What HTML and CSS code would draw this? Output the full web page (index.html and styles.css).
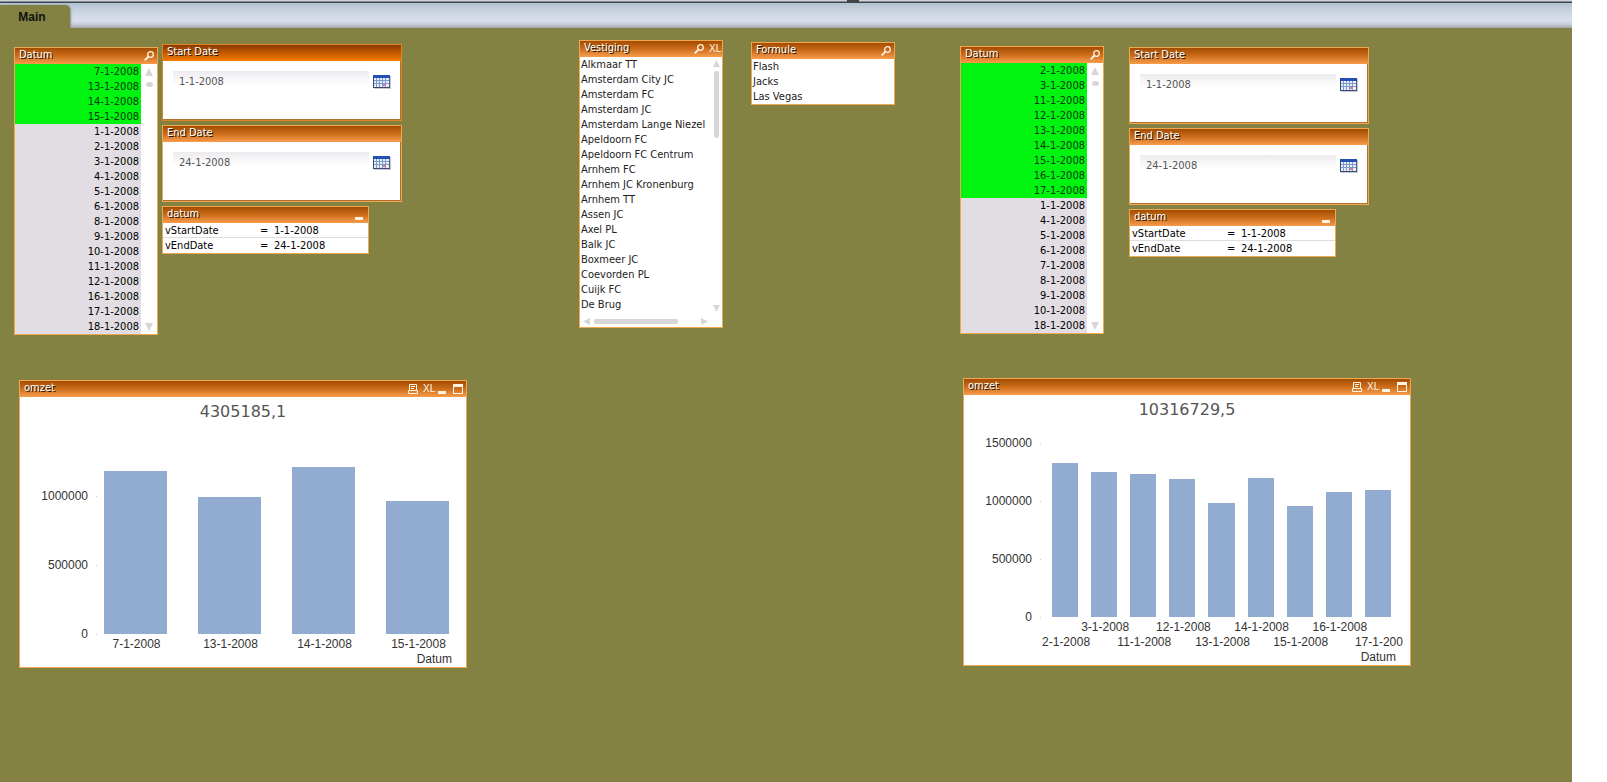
FILE: index.html
```html
<!DOCTYPE html>
<html lang="nl">
<head>
<meta charset="utf-8">
<title>Main</title>
<link rel="stylesheet" href="styles.css">
</head>
<body>
<svg class="defs" aria-hidden="true">
  <symbol id="search" viewBox="0 0 10 10"><circle cx="6.5" cy="3.5" r="2.8" fill="none" stroke="currentColor" stroke-width="1.3"/><path d="M4.5 5.5L.7 9.3" stroke="currentColor" stroke-width="1.8"/></symbol>
  <symbol id="print" viewBox="0 0 10 10"><path d="M1.5 6V.5h7V6M.5 6.5h9v3h-9zM3 2.5h4M3 4.5h3" fill="none" stroke="currentColor"/></symbol>
  <symbol id="min" viewBox="0 0 10 10"><path d="M0 7h8v3H0z" fill="currentColor"/></symbol>
  <symbol id="max" viewBox="0 0 10 10"><path d="M0 0h10v10H0zM1 3v6h8V3z" fill="currentColor" fill-rule="evenodd"/></symbol>
  <symbol id="tri" viewBox="0 0 8 8"><path d="M4 0l4 8H0z" fill="currentColor"/></symbol>
  <symbol id="cal" viewBox="0 0 18 14">
    <path d="M0 0h17v13H0z" fill="#4a5f94"/><path d="M1 3h15v9H1z" fill="#e6eefa"/><path d="M0 0h17v3H0z" fill="#2450b4"/>
    <path d="M1 5.5h15M1 8.5h15M3.5 3v9M6.5 3v9M9.5 3v9M12.5 3v9" stroke="#7e9ac8" fill="none"/><path d="M10 9h3v2h-3z" fill="#e07898"/>
    <path d="M0 12.5h17M.5 3v10" stroke="#3c4a70"/><path d="M1 13.5h17M17.5 1v13" stroke="#c8c8d0"/>
  </symbol>
</svg>

<div class="app">
  <nav class="tabs"><span class="grip"></span><button class="tab" type="button">Main</button></nav>

  <main class="sheet">
    <section class="win list datum-a">
      <header class="bar"><h2>Datum</h2><button type="button" aria-label="Search"><svg><use href="#search"/></svg></button></header>
      <div class="listbody">
        <ul class="dates">
          <li class="on">7-1-2008</li><li class="on">13-1-2008</li><li class="on">14-1-2008</li><li class="on">15-1-2008</li>
          <li>1-1-2008</li><li>2-1-2008</li><li>3-1-2008</li><li>4-1-2008</li><li>5-1-2008</li><li>6-1-2008</li><li>8-1-2008</li><li>9-1-2008</li><li>10-1-2008</li><li>11-1-2008</li><li>12-1-2008</li><li>16-1-2008</li><li>17-1-2008</li><li>18-1-2008</li>
        </ul>
        <div class="scroll"><button type="button" aria-label="Up"><svg><use href="#tri"/></svg></button><span class="knob"></span><button class="down" type="button" aria-label="Down"><svg><use href="#tri"/></svg></button></div>
      </div>
    </section>

    <section class="win date active start-a">
      <header class="bar"><h2><label for="s1">Start Date</label></h2></header>
      <div class="field"><input id="s1" type="text" value="1-1-2008"><button type="button" aria-label="Pick start date"><svg><use href="#cal"/></svg></button></div>
    </section>
    <section class="win date end-a">
      <header class="bar"><h2><label for="e1">End Date</label></h2></header>
      <div class="field"><input id="e1" type="text" value="24-1-2008"><button type="button" aria-label="Pick end date"><svg><use href="#cal"/></svg></button></div>
    </section>
    <section class="win vars vars-a">
      <header class="bar"><h2>datum</h2><button type="button" aria-label="Minimize"><svg><use href="#min"/></svg></button></header>
      <table><tr><th>vStartDate</th><td>=</td><td>1-1-2008</td></tr><tr><th>vEndDate</th><td>=</td><td>24-1-2008</td></tr></table>
    </section>

    <section class="win list vestiging">
      <header class="bar"><h2>Vestiging</h2><button type="button" aria-label="Search"><svg><use href="#search"/></svg></button><button class="xl" type="button">XL</button></header>
      <div class="listbody">
        <ul class="names">
          <li>Alkmaar TT</li><li>Amsterdam City JC</li><li>Amsterdam FC</li><li>Amsterdam JC</li><li>Amsterdam Lange Niezel</li><li>Apeldoorn FC</li><li>Apeldoorn FC Centrum</li><li>Arnhem FC</li><li>Arnhem JC Kronenburg</li><li>Arnhem TT</li><li>Assen JC</li><li>Axel PL</li><li>Balk JC</li><li>Boxmeer JC</li><li>Coevorden PL</li><li>Cuijk FC</li><li>De Brug</li>
        </ul>
        <div class="scroll slim"><button type="button" aria-label="Up"><svg><use href="#tri"/></svg></button><span class="thumb"></span><button class="down" type="button" aria-label="Down"><svg><use href="#tri"/></svg></button></div>
      </div>
      <div class="hscroll"><button class="left" type="button" aria-label="Left"><svg><use href="#tri"/></svg></button><span class="thumb"></span><button class="right" type="button" aria-label="Right"><svg><use href="#tri"/></svg></button></div>
    </section>

    <section class="win list formule">
      <header class="bar"><h2>Formule</h2><button type="button" aria-label="Search"><svg><use href="#search"/></svg></button></header>
      <ul class="names"><li>Flash</li><li>Jacks</li><li>Las Vegas</li></ul>
    </section>

    <section class="win list datum-b">
      <header class="bar"><h2>Datum</h2><button type="button" aria-label="Search"><svg><use href="#search"/></svg></button></header>
      <div class="listbody">
        <ul class="dates">
          <li class="on">2-1-2008</li><li class="on">3-1-2008</li><li class="on">11-1-2008</li><li class="on">12-1-2008</li><li class="on">13-1-2008</li><li class="on">14-1-2008</li><li class="on">15-1-2008</li><li class="on">16-1-2008</li><li class="on">17-1-2008</li>
          <li>1-1-2008</li><li>4-1-2008</li><li>5-1-2008</li><li>6-1-2008</li><li>7-1-2008</li><li>8-1-2008</li><li>9-1-2008</li><li>10-1-2008</li><li>18-1-2008</li>
        </ul>
        <div class="scroll"><button type="button" aria-label="Up"><svg><use href="#tri"/></svg></button><span class="knob"></span><button class="down" type="button" aria-label="Down"><svg><use href="#tri"/></svg></button></div>
      </div>
    </section>

    <section class="win date start-b">
      <header class="bar"><h2><label for="s2">Start Date</label></h2></header>
      <div class="field"><input id="s2" type="text" value="1-1-2008"><button type="button" aria-label="Pick start date"><svg><use href="#cal"/></svg></button></div>
    </section>
    <section class="win date end-b">
      <header class="bar"><h2><label for="e2">End Date</label></h2></header>
      <div class="field"><input id="e2" type="text" value="24-1-2008"><button type="button" aria-label="Pick end date"><svg><use href="#cal"/></svg></button></div>
    </section>
    <section class="win vars vars-b">
      <header class="bar"><h2>datum</h2><button type="button" aria-label="Minimize"><svg><use href="#min"/></svg></button></header>
      <table><tr><th>vStartDate</th><td>=</td><td>1-1-2008</td></tr><tr><th>vEndDate</th><td>=</td><td>24-1-2008</td></tr></table>
    </section>

    <section class="win chart omzet-a">
      <header class="bar"><h2>omzet</h2><button type="button" aria-label="Print"><svg><use href="#print"/></svg></button><button class="xl" type="button">XL</button><button type="button" aria-label="Minimize"><svg><use href="#min"/></svg></button><button type="button" aria-label="Maximize"><svg><use href="#max"/></svg></button></header>
      <h3>4305185,1</h3>
      <div class="plot">
        <ol class="axis"><li>1000000</li><li>500000</li><li>0</li></ol>
        <div class="bars">
          <span style="height:163px"></span><span style="height:137px"></span><span style="height:167px"></span><span style="height:133px"></span>
        </div>
      </div>
      <div class="cats"><span>7-1-2008</span><span>13-1-2008</span><span>14-1-2008</span><span>15-1-2008</span></div>
      <p class="dim">Datum</p>
    </section>

    <section class="win chart dense omzet-b">
      <header class="bar"><h2>omzet</h2><button type="button" aria-label="Print"><svg><use href="#print"/></svg></button><button class="xl" type="button">XL</button><button type="button" aria-label="Minimize"><svg><use href="#min"/></svg></button><button type="button" aria-label="Maximize"><svg><use href="#max"/></svg></button></header>
      <h3>10316729,5</h3>
      <div class="plot">
        <ol class="axis"><li>1500000</li><li>1000000</li><li>500000</li><li>0</li></ol>
        <div class="bars">
          <span style="height:154px"></span><span style="height:145px"></span><span style="height:143px"></span><span style="height:138px"></span><span style="height:114px"></span><span style="height:139px"></span><span style="height:111px"></span><span style="height:125px"></span><span style="height:127px"></span>
        </div>
      </div>
      <div class="cats"><span>2-1-2008</span><span>3-1-2008</span><span>11-1-2008</span><span>12-1-2008</span><span>13-1-2008</span><span>14-1-2008</span><span>15-1-2008</span><span>16-1-2008</span><span>17-1-200</span></div>
      <p class="dim">Datum</p>
    </section>
  </main>
</div>
</body>
</html>
```
FILE: styles.css
```css
* { box-sizing: border-box; margin: 0; padding: 0; }
body {
  background: #fff;
  font: 11px/15px "DejaVu Sans Condensed", "Noto Sans", sans-serif;
  color: #222;
}
ul, ol { list-style: none; }
button { border: 0; background: none; color: inherit; font: inherit; }
svg { display: block; }
.defs { display: none; }

.app { display: flex; flex-direction: column; min-height: 100vh; margin-right: 35px; background: #848243; }

/* tab strip */
.tabs {
  position: relative;
  display: flex;
  align-items: flex-end;
  height: 28px;
  border-top: 1px solid #d0d2d6;
  background: linear-gradient(#858b92 0 1px, #3c464c 1px 2px, #b4c3d0 2px, #ccd6e2 12px, #d8deea 20px, #c4c8d4 24px, #a2a3a8);
}
.grip { position: absolute; top: -1px; left: 847px; width: 12px; height: 2px; background: #444; }
.tab {
  width: 70px;
  height: 23px;
  padding-right: 6px;
  border-radius: 0 5px 0 0;
  background: #848243;
  box-shadow: 1px 0 2px #8a929c;
  clip-path: inset(-2px -4px 0 0);
  font: bold 12px/24px "Liberation Sans", sans-serif;
  color: #111;
}

/* sheet: free canvas that holds the object windows */
.sheet { position: relative; flex: 1; min-height: 660px; }
.win { position: absolute; border: 1px solid #f0a850; background: #fff; }
.list { width: 144px; }
.date { width: 240px; }
.vars { width: 207px; }
.chart { width: 448px; }
.datum-a { left: 14px; top: 19px; }
.start-a { left: 162px; top: 16px; }
.end-a { left: 162px; top: 97px; }
.vars-a { left: 162px; top: 178px; }
.vestiging { left: 579px; top: 12px; }
.formule { left: 751px; top: 14px; }
.datum-b { left: 960px; top: 18px; }
.start-b { left: 1129px; top: 19px; }
.end-b { left: 1129px; top: 100px; }
.vars-b { left: 1129px; top: 181px; }
.omzet-a { left: 19px; top: 352px; }
.omzet-b { left: 963px; top: 350px; }

/* caption bar */
.bar {
  display: flex;
  align-items: center;
  gap: 5px;
  height: 16px;
  padding: 0 3px 0 4px;
  background: linear-gradient(#a44c00, #cc6e1c 50%, #f89c4c);
  color: #fff4e4;
}
.bar h2, .chart .bar h2 { flex: 1; height: 16px; font: 11px/14px "DejaVu Sans Condensed", "Noto Sans", sans-serif; color: #fff; text-shadow: 1px 1px 0 #201000; }
.bar svg { width: 10px; height: 10px; }
.bar .xl { width: 10px; font: 10px/12px "Liberation Sans Narrow", "Liberation Sans", sans-serif; }
.active { border-color: #e08420; }
.active .bar { background: linear-gradient(#883a00, #c45a00 50%, #f47c04); }

/* list boxes */
.listbody { display: flex; }
.dates { flex: 1; background: #e1dde2; text-align: right; color: #000; }
.dates li { height: 15px; padding-right: 2px; }
.dates .on { background: #00f410; color: #083808; }
.names { flex: 1; min-width: 0; }
.names li { height: 15px; padding-left: 1px; white-space: nowrap; }
.scroll { display: flex; flex-direction: column; align-items: center; gap: 6px; width: 16px; padding: 4px 0 3px; color: #d8d5d9; }
.scroll svg { width: 8px; height: 8px; }
.scroll .down { margin-top: auto; }
.down svg { transform: rotate(180deg); }
.knob { width: 7px; height: 5px; border-radius: 50%; background: #d8d5d9; }
.thumb { border-radius: 2px; background: #d8d5d9; }
.slim { width: 12px; gap: 4px; padding: 3px 0 0; }
.slim svg, .hscroll svg { width: 7px; height: 7px; }
.slim .thumb { width: 5px; height: 67px; }
.hscroll { display: flex; align-items: center; gap: 4px; height: 15px; padding: 4px 14px 0 3px; color: #d8d5d9; }
.hscroll .thumb { width: 84px; height: 5px; }
.left svg { transform: rotate(-90deg); }
.right { margin-left: auto; }
.right svg { transform: rotate(90deg); }

/* date inputs */
.field {
  display: flex;
  align-items: flex-start;
  gap: 4px;
  height: 59px;
  padding: 10px;
  box-shadow: inset -1px -1px 0 #b07030;
}
.field input {
  flex: 1;
  min-width: 0;
  height: 20px;
  padding-left: 6px;
  border: 0;
  background: linear-gradient(#eeebef, #fff 14px);
  font: inherit;
  color: #555;
}
.field button { padding-top: 4px; }
.field svg { width: 18px; height: 14px; }

/* variables */
.vars table { width: 100%; border-collapse: collapse; table-layout: fixed; color: #000; }
.vars tr { height: 15px; }
.vars tr:first-child { box-shadow: inset 0 -1px #ddd; }
.vars th { width: 97px; padding-left: 2px; font-weight: normal; text-align: left; }
.vars td:nth-child(2) { width: 14px; }

/* charts */
.chart { font: 12px/15px "Liberation Sans", sans-serif; color: #333; }
.chart h3 { font: 16px/30px "DejaVu Sans", sans-serif; color: #555; text-align: center; }
.plot { display: flex; height: 207px; }
.dense .plot { height: 192px; }
.axis { display: flex; flex-direction: column; justify-content: flex-end; width: 77px; margin-bottom: -8px; }
.axis li { display: flex; flex: none; align-items: flex-end; justify-content: flex-end; gap: 8px; height: 69px; }
.dense .axis li { height: 58px; }
.axis li::after { content: ""; width: 1px; height: 1px; margin-bottom: 7px; background: #ccc; }
.bars { display: flex; flex: 1; align-items: flex-end; gap: 31px; padding: 0 17px 0 7px; }
.bars span { flex: 1; background: #92acd1; }
.cats { display: flex; gap: 31px; padding: 3px 16px 0 85px; }
.cats span { display: flex; flex: 1 1 0; justify-content: center; width: 0; white-space: nowrap; }
.dense .bars { gap: 13px; padding: 0 19px 0 11px; }
.dense .cats { gap: 13px; padding: 3px 18px 0 89px; height: 33px; }
.dense .cats span:nth-child(odd) { padding-top: 15px; }
.dim { padding-right: 14px; text-align: right; }
```
